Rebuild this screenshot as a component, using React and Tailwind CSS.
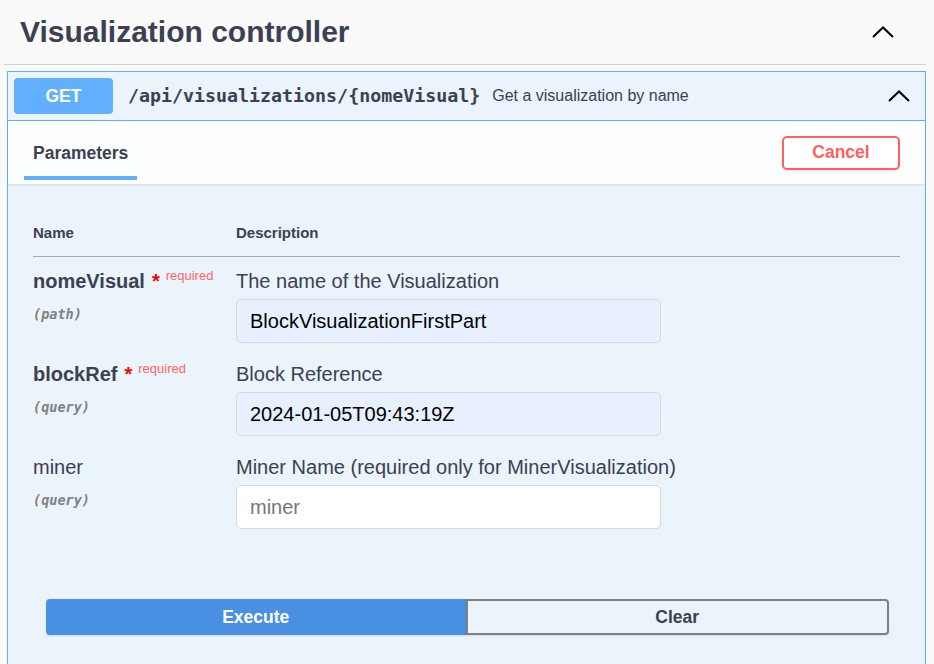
import React from "react";

const sans = { fontFamily: '"Liberation Sans", Arial, sans-serif' };

function ChevronUp({ className }) {
  return (
    <svg className={className} viewBox="0 0 22 12" fill="none">
      <polyline points="1,11 11,1.5 21,11" stroke="#000" strokeWidth="2" />
    </svg>
  );
}

function ParamRow({ name, required, where, description, value, placeholder, filled }) {
  return (
    <div className="grid grid-cols-[203px_1fr] pt-[13px] pb-[7px]">
      <div>
        <div className="flex items-start leading-[23px] h-[23px]">
          <span className={`text-[20px] ${required ? "font-bold" : ""}`}>{name}</span>
          {required && (
            <>
              <span className="text-[20px] font-bold text-[#ff0000] pl-[7px]">*</span>
              <span className="text-[13px] leading-[13px] text-[#ff6666] pl-[6px] -mt-[1px]">required</span>
            </>
          )}
        </div>
        <div
          className="mt-[12px] text-[13.5px] leading-[18px] italic font-bold text-[#808080]"
          style={{ fontFamily: '"DejaVu Sans Mono", monospace' }}
        >
          ({where})
        </div>
      </div>
      <div>
        <div className="text-[20px] leading-[23px]">{description}</div>
        <input
          readOnly
          value={value}
          placeholder={placeholder}
          className={`mt-[6px] w-[425px] h-[44px] rounded-[5px] border border-[#d9d9d9] px-[13px] text-[20px] text-black placeholder:text-[#767676] outline-none ${
            filled ? "bg-[#e8f0fe]" : "bg-white"
          }`}
          style={sans}
        />
      </div>
    </div>
  );
}

export default function App() {
  return (
    <div className="min-h-[664px] bg-[#fafafa] pl-[4px] pr-[8px] text-[#3b4151]" style={sans}>
      <div className="flex items-center justify-between h-[65px] border-b border-[#cfd1d5] pl-[16px] pr-[32px]">
        <h3 className="text-[30px] font-bold leading-[34px]">Visualization controller</h3>
        <ChevronUp className="w-[22px] h-[12px]" />
      </div>

      <div className="mt-[6px] ml-[3px] border border-[#61affe] bg-[#ebf3fb]">
        <div className="flex items-center h-[49px] border-b border-[#61affe] pl-[6px] pr-[15px]">
          <span className="w-[99px] h-[36px] rounded-[4px] bg-[#61affe] text-white text-[17.5px] font-bold flex items-center justify-center">
            GET
          </span>
          <span
            className="ml-[15px] text-[18.3px] font-bold text-[#3b4151]"
            style={{ fontFamily: '"DejaVu Sans Mono", monospace' }}
          >
            /api/visualizations/{"{nomeVisual}"}
          </span>
          <span className="ml-[12px] text-[16px] text-[#3b4151]">Get a visualization by name</span>
          <ChevronUp className="ml-auto w-[22px] h-[12px]" />
        </div>

        <div className="flex items-stretch justify-between h-[63px] bg-white/90 shadow-[0_1px_2px_rgba(0,0,0,0.1)] pl-[16px] pr-[25px]">
          <div className="flex flex-col justify-end pb-[4px]">
            <div className="px-[9px] text-[17.5px] leading-[20px] font-bold">Parameters</div>
            <div className="mt-[13px] h-[4px] bg-[#61affe]" />
          </div>
          <button className="self-center w-[118px] h-[34px] rounded-[5px] border-2 border-[#ff6060] bg-white text-[#ff6060] text-[17.5px] font-bold shadow-[0_1px_2px_rgba(0,0,0,0.1)]">
            Cancel
          </button>
        </div>

        <div className="pt-[40px] px-[25px]">
          <div className="grid grid-cols-[203px_1fr] text-[15px] leading-[17px] font-bold pb-[15px] border-b border-[#a6aab3]">
            <div>Name</div>
            <div>Description</div>
          </div>
          <ParamRow
            name="nomeVisual"
            required
            where="path"
            description="The name of the Visualization"
            value="BlockVisualizationFirstPart"
            filled
          />
          <ParamRow
            name="blockRef"
            required
            where="query"
            description="Block Reference"
            value="2024-01-05T09:43:19Z"
            filled
          />
          <ParamRow
            name="miner"
            where="query"
            description="Miner Name (required only for MinerVisualization)"
            value=""
            placeholder="miner"
          />
        </div>

        <div className="flex pl-[38px] pr-[36px] pt-[63px] pb-[38px]">
          <button className="flex-1 h-[36px] rounded-l-[4px] bg-[#4990e2] text-white text-[17.5px] font-bold shadow-[0_1px_2px_rgba(0,0,0,0.1)]">
            Execute
          </button>
          <button className="flex-1 h-[36px] rounded-r-[4px] border-2 border-[#808080] bg-transparent text-[#3b4151] text-[17.5px] font-bold shadow-[0_1px_2px_rgba(0,0,0,0.1)]">
            Clear
          </button>
        </div>
      </div>
    </div>
  );
}
